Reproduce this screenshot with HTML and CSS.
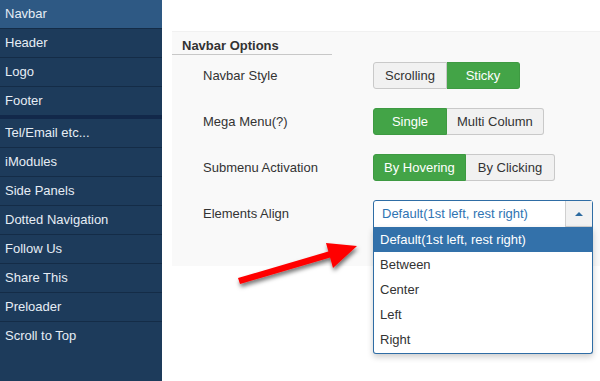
FILE: index.html
```html
<!DOCTYPE html>
<html lang="en">
<head>
    <meta charset="UTF-8">
    <title>Navbar Options</title>
    <link rel="stylesheet" href="styles.css">
</head>
<body>
    <div class="sidebar">
        <a class="side-item active">Navbar</a>
        <a class="side-item">Header</a>
        <a class="side-item">Logo</a>
        <a class="side-item group-end">Footer</a>
        <a class="side-item">Tel/Email etc...</a>
        <a class="side-item">iModules</a>
        <a class="side-item">Side Panels</a>
        <a class="side-item">Dotted Navigation</a>
        <a class="side-item">Follow Us</a>
        <a class="side-item">Share This</a>
        <a class="side-item">Preloader</a>
        <a class="side-item last">Scroll to Top</a>
    </div>

    <div class="main">
        <div class="options-panel">
            <div class="panel-title">Navbar Options</div>

            <div class="option-row">
                <label class="option-label">Navbar Style</label>
                <div class="btn-group">
                    <span class="btn">Scrolling</span>
                    <span class="btn on">Sticky</span>
                </div>
            </div>
            <div class="option-row">
                <label class="option-label">Mega Menu(?)</label>
                <div class="btn-group">
                    <span class="btn on">Single</span>
                    <span class="btn">Multi Column</span>
                </div>
            </div>
            <div class="option-row">
                <label class="option-label">Submenu Activation</label>
                <div class="btn-group">
                    <span class="btn on">By Hovering</span>
                    <span class="btn wide">By Clicking</span>
                </div>
            </div>
            <div class="option-row">
                <label class="option-label">Elements Align</label>
                <div class="select-wrap">
                    <div class="select-box">
                        <span class="select-value">Default(1st left, rest right)</span>
                        <span class="select-arrow"><span class="caret"></span></span>
                    </div>
                    <ul class="select-list">
                        <li class="selected">Default(1st left, rest right)</li>
                        <li>Between</li>
                        <li>Center</li>
                        <li>Left</li>
                        <li>Right</li>
                    </ul>
                </div>
            </div>
        </div>
    </div>

    <svg class="pointer-arrow" width="600" height="381" viewBox="0 0 600 381">
        <defs>
            <filter id="shadow" x="-20%" y="-20%" width="140%" height="160%">
                <feDropShadow dx="1" dy="3" stdDeviation="2" flood-color="#000" flood-opacity="0.55"/>
            </filter>
        </defs>
        <g filter="url(#shadow)" fill="#ff0000">
            <polygon points="238,278 330,251 332,257 240,284"/>
            <polygon points="326,243 357,246 333,268"/>
        </g>
    </svg>
</body>
</html>
```

FILE: styles.css
```css
body {
    margin: 0;
    font-family: "Liberation Sans", Arial, sans-serif;
    font-size: 13px;
    color: #333;
    background-color: #fff;
    display: flex;
    height: 381px;
    overflow: hidden;
}
.sidebar {
    width: 162px;
    flex-shrink: 0;
    background-color: #1d3b5b;
    display: flex;
    flex-direction: column;
}
.side-item {
    display: block;
    height: 28px;
    line-height: 28px;
    padding-left: 5px;
    color: #e6edf5;
    border-bottom: 1px solid #142c47;
}
.side-item.active {
    background-color: #2e5984;
}
.side-item.group-end {
    border-bottom: 4px solid #12284a;
    box-shadow: inset 0 -1px 0 #1d3b5b;
}
.side-item.last {
    border-bottom: none;
}
.main {
    flex: 1;
    padding: 31px 0 0 10px;
}
.options-panel {
    position: relative;
    height: 235px;
    background-color: #f9f9f9;
    border-top: 1px solid #f1f1f1;
    box-sizing: border-box;
}
.panel-title {
    width: 150px;
    padding: 6px 0 0 10px;
    height: 16px;
    line-height: 16px;
    font-weight: bold;
    border-bottom: 1px solid #c8c8c8;
}
.option-row {
    display: flex;
    align-items: center;
    height: 27px;
    margin-top: 19px;
}
.panel-title + .option-row {
    margin-top: 7px;
}
.option-label {
    width: 170px;
    padding-left: 31px;
}
.btn-group {
    display: flex;
    height: 27px;
}
.btn {
    min-width: 52px;
    padding: 0 10px;
    text-align: center;
    line-height: 25px;
    background-color: #f1f1f1;
    border: 1px solid #c9c9c9;
    color: #333;
}
.btn.wide {
    padding: 0 12px;
}
.btn:first-child {
    border-radius: 3px 0 0 3px;
}
.btn:last-child {
    border-radius: 0 3px 3px 0;
    border-left: none;
}
.btn.on {
    background-color: #43a447;
    border-color: #3e9a42;
    color: #fff;
}
.select-wrap {
    position: relative;
    align-self: flex-start;
}
.select-box {
    display: flex;
    width: 220px;
    height: 28px;
    box-sizing: border-box;
    border: 1px solid #2f6da5;
    border-radius: 3px 3px 0 0;
    background-color: #fff;
}
.select-value {
    flex: 1;
    padding-left: 8px;
    line-height: 26px;
    color: #2f74b3;
}
.select-arrow {
    width: 27px;
    display: flex;
    align-items: center;
    justify-content: center;
    background-color: #f2f2f2;
    border-left: 1px solid #d0d0d0;
    border-bottom: 1px solid #d0d0d0;
    box-sizing: border-box;
}
.caret {
    width: 0;
    height: 0;
    border-left: 4px solid transparent;
    border-right: 4px solid transparent;
    border-bottom: 4px solid #2c6a9f;
}
.select-list {
    position: absolute;
    left: 0;
    top: 27px;
    width: 220px;
    box-sizing: border-box;
    margin: 0;
    padding: 0 0 1px 0;
    list-style: none;
    background-color: #fff;
    border: 1px solid #2f6da5;
    border-top: none;
    border-radius: 0 0 3px 3px;
    box-shadow: 0 3px 6px rgba(0, 0, 0, 0.2);
}
.select-list li {
    height: 25px;
    line-height: 25px;
    padding-left: 6px;
    color: #333;
}
.select-list li.selected {
    background-color: #3371aa;
    color: #fff;
}
.pointer-arrow {
    position: absolute;
    left: 0;
    top: 0;
    pointer-events: none;
}
```
